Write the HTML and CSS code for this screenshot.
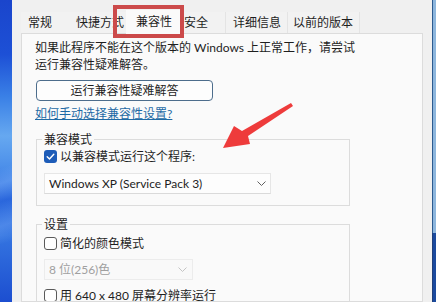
FILE: index.html
```html
<!DOCTYPE html>
<html>
<head>
<meta charset="utf-8">
<link rel="stylesheet" href="styles.css">
</head>
<body>
<div class="screen">
  <div class="wall"></div>
  <div class="dialog">
    <div class="tabs">
      <div class="tab t1">常规</div>
      <div class="tab t2">快捷方式</div>
      <div class="tab t3 active">兼容性</div>
      <div class="tab t4">安全</div>
      <div class="tab t5">详细信息</div>
      <div class="tab t6">以前的版本</div>
    </div>
    <div class="panel">
      <p class="intro">如果此程序不能在这个版本的 Windows 上正常工作，请尝试<br>运行兼容性疑难解答。</p>
      <div class="btn">运行兼容性疑难解答</div>
      <a class="link">如何手动选择兼容性设置?</a>
      <fieldset class="group g1">
        <legend>兼容模式</legend>
        <div class="check-row"><span class="cb checked"><svg width="13" height="13" viewBox="0 0 13 13"><polyline points="3.2,6.8 5.5,9 9.8,4.2" fill="none" stroke="#fff" stroke-width="1.4" stroke-linecap="round" stroke-linejoin="round"/></svg></span>以兼容模式运行这个程序:</div>
        <div class="select s1"><span>Windows XP (Service Pack 3)</span><svg class="chev" width="9" height="5" viewBox="0 0 9 5"><polyline points="0.5,0.5 4.5,4.5 8.5,0.5" fill="none" stroke="#606060" stroke-width="1"/></svg></div>
      </fieldset>
      <fieldset class="group g2">
        <legend>设置</legend>
        <div class="check-row r2"><span class="cb"></span>简化的颜色模式</div>
        <div class="select s2 disabled"><span>8 位(256)色</span><svg class="chev" width="9" height="5" viewBox="0 0 9 5"><polyline points="0.5,0.5 4.5,4.5 8.5,0.5" fill="none" stroke="#c4c4c4" stroke-width="1"/></svg></div>
        <div class="check-row r3"><span class="cb"></span>用 640 x 480 屏幕分辨率运行</div>
      </fieldset>
    </div>
  </div>
  <div class="edge"></div>
</div>
<div class="highlight"></div>
<svg class="arrow" width="436" height="302" viewBox="0 0 436 302">
  <polygon points="291,103 293,106 248,136 250,144 223,148 234,126 242,131" fill="#ee3b3b"/>
</svg>
</body>
</html>
```

FILE: styles.css
```css
html, body {
  margin: 0;
  padding: 0;
}
body {
  width: 436px;
  height: 302px;
  overflow: hidden;
  position: relative;
  font-family: Lato, "Noto Sans CJK SC", sans-serif;
  font-size: 12px;
  color: #1e1e1e;
}
.screen {
  display: flex;
  height: 302px;
}
.wall {
  width: 12px;
  flex: none;
  background:
    linear-gradient(160deg, transparent 0 55%, rgba(140, 190, 255, 0.35) 60%, transparent 66%, rgba(140, 190, 255, 0.3) 74%, transparent 80%),
    linear-gradient(to bottom, #1a45cc 0%, #1d50d6 18%, #3a80e6 32%, #66a8f0 45%, #4d90ea 55%, #2a66dc 66%, #3474e0 78%, #1c4ed0 100%);
}
.dialog {
  width: 420px;
  flex: none;
  background: #f0f0f0;
  padding-top: 12px;
  box-sizing: border-box;
  display: flex;
  flex-direction: column;
}
.edge {
  width: 4px;
  flex: none;
  background:
    linear-gradient(to right, #2d5b8f 0 1px, #8db6dd 1px) top / 100% 233px no-repeat,
    linear-gradient(to right, #1f3f7a 0 1px, #1b4a9e 1px);
}
.tabs {
  display: flex;
  height: 21px;
  margin-left: 9px;
  position: relative;
  z-index: 1;
}
.tab {
  line-height: 21px;
  white-space: nowrap;
  background: #f2f2f2;
  box-sizing: border-box;
}
.t1 { padding: 0 12px 0 7px; }
.t2 { padding: 0 2px 0 12px; }
.t3 { padding: 0 10px; }
.t4 { padding: 0 17px 0 2px; }
.t5 { padding: 0 6px 0 7px; border-left: 1px solid #e4e4e4; }
.t6 { padding: 0 6px 0 5px; border-left: 1px solid #e4e4e4; border-right: 1px solid #e4e4e4; }
.active {
  background: #fafafa;
  height: 24px;
  margin-top: -2px;
  line-height: 24px;
}
.panel {
  margin-left: 9px;
  width: 402px;
  flex: 1;
  box-sizing: border-box;
  border: 1px solid #dcdcdc;
  background: #fafafa;
  padding: 5px 0 0 13px;
  overflow: hidden;
}
.intro {
  margin: 0;
  line-height: 17px;
}
.btn {
  margin-top: 7px;
  margin-left: 1px;
  width: 177px;
  height: 21px;
  box-sizing: border-box;
  border: 1px solid #4d6d8c;
  border-radius: 4px;
  background: #fdfdfd;
  text-align: center;
  line-height: 19px;
}
.link {
  display: block;
  margin-top: 4px;
  line-height: 17px;
  color: #1f6aa5;
  text-decoration: underline;
  width: max-content;
}
.group {
  margin: 9px 0 0 1px;
  width: 314px;
  box-sizing: border-box;
  border: 1px solid #dcdcdc;
  padding: 0 7px 11px;
  min-width: 0;
}
.g2 {
  margin-top: 10px;
}
.group legend {
  padding: 0 2px;
  margin-left: -2px;
  line-height: 17px;
}
.check-row {
  display: flex;
  align-items: center;
  line-height: 17px;
}
.r2 { margin-top: 2px; }
.r3 { margin-top: 7px; }
.cb {
  width: 13px;
  height: 13px;
  box-sizing: border-box;
  border: 1px solid #5a5a5a;
  border-radius: 3px;
  background: #fff;
  margin-right: 3px;
  flex: none;
  display: flex;
}
.cb.checked {
  border: none;
  background: #1d5cb8;
}
.select {
  margin-top: 8px;
  height: 21px;
  box-sizing: border-box;
  border: 1px solid #e6e6e6;
  border-bottom-color: #dadada;
  background: #fdfdfd;
  display: flex;
  align-items: center;
  justify-content: space-between;
  padding: 0 4px 0 4px;
  line-height: 19px;
}
.s1 { width: 227px; }
.s2 { width: 149px; margin-top: 7px; padding-right: 5px; }
.disabled { color: #a0a0a0; background: #f9f9f9; border-color: #ececec; }
.highlight {
  position: absolute;
  left: 113px;
  top: 5px;
  width: 71px;
  height: 33px;
  box-sizing: border-box;
  border: 4px solid #cc4a4a;
  z-index: 2;
}
.arrow {
  position: absolute;
  left: 0;
  top: 0;
  z-index: 3;
}
```
